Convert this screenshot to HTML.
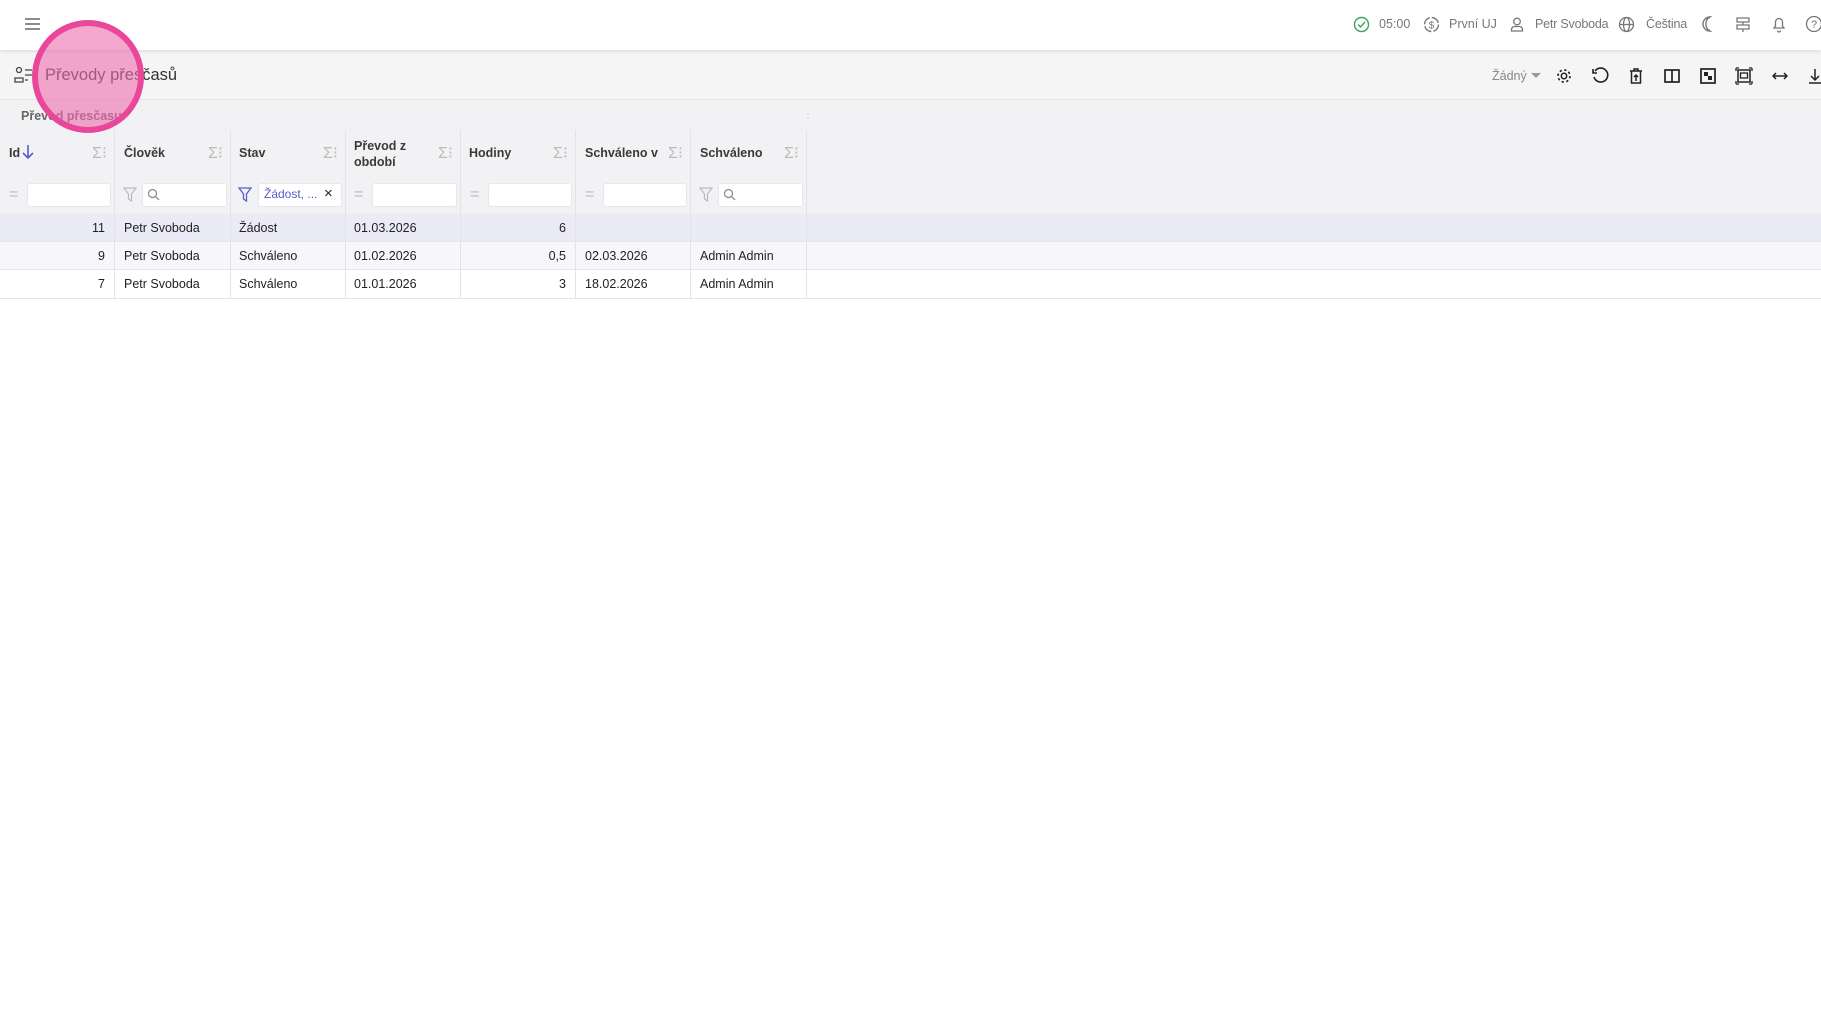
<!DOCTYPE html>
<html><head><meta charset="utf-8"><style>
*{box-sizing:border-box;margin:0;padding:0}
body{width:1821px;height:1017px;background:#fff;font-family:"Liberation Sans",sans-serif;color:#222;position:relative;overflow:hidden;font-size:12.5px}
.top{position:absolute;left:0;top:0;width:1821px;height:50px;background:#fff;box-shadow:0 1px 4px rgba(0,0,0,.12);z-index:2}
.gray{position:absolute;left:0;top:50px;width:1821px;height:164px;background:#f2f2f4}
.titlebar{position:absolute;left:0;top:50px;width:1821px;height:50px;background:#f5f5f5;border-bottom:1px solid #e6e6e8}
.abs{position:absolute;white-space:nowrap}
.ti{color:#777;font-size:12.5px}
.hd{font-weight:bold;font-size:12.5px;color:#3a3a3a}
.col{position:absolute;top:130px;height:169px;border-left:1px solid #e2e2e8}
.inp{position:absolute;top:183px;height:24px;background:#fff;border-radius:3px;border:1px solid #e8e8ec}
.row{position:absolute;left:0;width:1821px;border-bottom:1px solid #e4e4ea}
.sig{position:absolute;color:#bbb;font-size:16px}
svg{position:absolute}
</style></head><body>
<div class="top"></div>
<div class="gray"></div>
<div class="titlebar"></div>
<div class="row" style="top:214px;height:28px;background:#ebebf7"></div>
<div class="row" style="top:242px;height:28px;background:#f7f7fb"></div>
<div class="row" style="top:270px;height:29px;background:#fff"></div>

<!-- top bar -->
<svg style="left:24px;top:17px;z-index:3" width="17" height="14"><path d="M1 2h15M1 7h15M1 12h15" stroke="#666" stroke-width="1.6"/></svg>
<div style="position:absolute;left:0;top:0;width:1821px;height:50px;z-index:3">
<svg style="left:1353px;top:16px" width="17" height="17"><circle cx="8.5" cy="8.5" r="7" fill="none" stroke="#3aa55a" stroke-width="1.4"/><path d="M5 8.5l2.5 2.5 4.5-5" fill="none" stroke="#3aa55a" stroke-width="1.4"/></svg>
<div class="abs ti" style="left:1379px;top:17px">05:00</div>
<svg style="left:1423px;top:16px" width="17" height="17"><circle cx="8.5" cy="8.5" r="7" fill="none" stroke="#777" stroke-width="1.4" stroke-dasharray="9 2"/><text x="8.5" y="12.5" font-size="10" text-anchor="middle" fill="#777" font-family="Liberation Sans">$</text></svg>
<div class="abs ti" style="left:1449px;top:17px">První UJ</div>
<svg style="left:1509px;top:16px" width="16" height="17"><circle cx="8" cy="5.5" r="3.3" fill="none" stroke="#777" stroke-width="1.3"/><path d="M2.5 15v-1.5a3 3 0 013-3h5a3 3 0 013 3V15z" fill="none" stroke="#777" stroke-width="1.3"/></svg>
<div class="abs ti" style="left:1535px;top:17px;letter-spacing:-0.2px">Petr Svoboda</div>
<svg style="left:1618px;top:16px" width="17" height="17"><circle cx="8.5" cy="8.5" r="7" fill="none" stroke="#777" stroke-width="1.3"/><ellipse cx="8.5" cy="8.5" rx="3" ry="7" fill="none" stroke="#777" stroke-width="1.3"/><path d="M1.5 8.5h14" stroke="#777" stroke-width="1.3"/></svg>
<div class="abs ti" style="left:1646px;top:17px;letter-spacing:-0.2px">Čeština</div>
<svg style="left:1698px;top:15px" width="18" height="18"><path d="M12 2a7 7 0 100 14 8 8 0 010-14z" fill="none" stroke="#777" stroke-width="1.4"/></svg>
<svg style="left:1734px;top:15px" width="18" height="18"><path d="M3 3h12v4H3zM3 10h12v4H3zM9 7v3M9 14v3" fill="none" stroke="#777" stroke-width="1.3"/></svg>
<svg style="left:1770px;top:15px" width="18" height="18"><path d="M4 13h10l-1.5-2V7a3.5 3.5 0 00-7 0v4zM7.5 15.5a1.5 1.5 0 003 0" fill="none" stroke="#777" stroke-width="1.3"/></svg>
<svg style="left:1805px;top:15px" width="18" height="18"><circle cx="9" cy="9" r="7.5" fill="none" stroke="#777" stroke-width="1.3"/><text x="9" y="13" font-size="11" text-anchor="middle" fill="#777" font-family="Liberation Sans">?</text></svg>
</div>

<!-- title -->
<svg style="left:14px;top:66px" width="20" height="18"><circle cx="5" cy="4" r="2.5" fill="none" stroke="#444" stroke-width="1.3"/><path d="M1 16v-4h8v4zM11 4h7M11 9h7M11 14h3" fill="none" stroke="#444" stroke-width="1.3"/></svg>
<div class="abs" style="left:45px;top:66px;font-size:16.5px;color:#333">Převody přesčasů</div>
<div class="abs" style="left:1492px;top:69px;color:#888;font-size:12.5px">Žádný</div>
<svg style="left:1531px;top:73px" width="10" height="6"><path d="M0 0h10L5 5z" fill="#999"/></svg>
<svg style="left:1555px;top:67px" width="18" height="18"><circle cx="9" cy="9" r="2.7" fill="none" stroke="#222" stroke-width="1.5"/><circle cx="9" cy="9" r="6" fill="none" stroke="#222" stroke-width="1.6" stroke-dasharray="2.4 2.3"/></svg>
<svg style="left:1591px;top:67px" width="18" height="18"><path d="M4 4a7 7 0 11-1 6" fill="none" stroke="#222" stroke-width="1.6"/><path d="M2 2v4h4" fill="none" stroke="#222" stroke-width="1.6"/></svg>
<svg style="left:1627px;top:67px" width="18" height="18"><path d="M3 4h12M7 4V2h4v2M4.5 4v12h9V4M9 14V8M7 10l2-2 2 2" fill="none" stroke="#222" stroke-width="1.5"/></svg>
<svg style="left:1663px;top:67px" width="18" height="18"><rect x="2" y="3" width="14" height="12" fill="none" stroke="#222" stroke-width="1.7"/><path d="M9 3v12" stroke="#222" stroke-width="1.7"/></svg>
<svg style="left:1699px;top:67px" width="18" height="18"><rect x="2" y="2" width="14" height="14" fill="none" stroke="#222" stroke-width="1.7"/><rect x="5" y="5" width="4" height="4" fill="#222"/><rect x="9" y="9" width="4" height="4" fill="#222"/></svg>
<svg style="left:1735px;top:67px" width="18" height="18"><rect x="3" y="3" width="12" height="12" fill="none" stroke="#222" stroke-width="1.5"/><rect x="5.5" y="6" width="7" height="5" fill="none" stroke="#222" stroke-width="1.3"/><path d="M1 1h3M1 1v3M17 1h-3M17 1v3M1 17h3M1 17v-3M17 17h-3M17 17v-3" stroke="#222" stroke-width="1.3"/></svg>
<svg style="left:1771px;top:67px" width="18" height="18"><path d="M2 9h14M5 6L2 9l3 3M13 6l3 3-3 3" fill="none" stroke="#222" stroke-width="1.5"/></svg>
<svg style="left:1806px;top:67px" width="18" height="18"><path d="M9 2v11M5 9l4 4 4-4M3 16h12" fill="none" stroke="#222" stroke-width="1.5"/></svg>

<div class="abs" style="left:21px;top:109px;color:#666;font-size:12.5px;font-weight:bold">Převod přesčasu</div>
<div class="abs" style="left:803px;top:113px;color:#ccc;font-size:10px;line-height:4px">⋮<br>⋮</div>

<!-- columns -->
<div class="col" style="left:114px"></div><div class="col" style="left:230px"></div><div class="col" style="left:345px"></div><div class="col" style="left:460px"></div><div class="col" style="left:575px"></div><div class="col" style="left:690px"></div><div class="col" style="left:806px"></div>

<div class="abs hd" style="left:9px;top:146px">Id</div>
<svg style="left:22px;top:144px" width="12" height="16"><path d="M6 1v13M1 9l5 5 5-5" fill="none" stroke="#5b5bd0" stroke-width="1.6"/></svg>
<div class="abs hd" style="left:124px;top:146px">Člověk</div>
<div class="abs hd" style="left:239px;top:146px">Stav</div>
<div class="abs hd" style="left:354px;top:138px;line-height:16px">Převod z<br>období</div>
<div class="abs hd" style="left:469px;top:146px">Hodiny</div>
<div class="abs hd" style="left:585px;top:146px">Schváleno v</div>
<div class="abs hd" style="left:700px;top:146px">Schváleno</div>

<div class="sig" style="left:92px;top:143px">Σ⁝</div><div class="sig" style="left:208px;top:143px">Σ⁝</div><div class="sig" style="left:323px;top:143px">Σ⁝</div><div class="sig" style="left:438px;top:143px">Σ⁝</div><div class="sig" style="left:553px;top:143px">Σ⁝</div><div class="sig" style="left:668px;top:143px">Σ⁝</div><div class="sig" style="left:784px;top:143px">Σ⁝</div>

<!-- filters -->
<div class="abs" style="left:9px;top:186px;color:#bbb;font-size:16px">=</div><div class="inp" style="left:27px;width:84px"></div>
<svg style="left:123px;top:187px" width="14" height="15"><path d="M1 1h12L8.5 7v7l-3-2V7z" fill="none" stroke="#bbb" stroke-width="1.2"/></svg><div class="inp" style="left:142px;width:85px"></div>
<svg style="left:147px;top:188px" width="13" height="13"><circle cx="5.5" cy="5.5" r="4" fill="none" stroke="#888" stroke-width="1.2"/><path d="M8.5 8.5l3.5 3.5" stroke="#888" stroke-width="1.2"/></svg>
<svg style="left:238px;top:187px" width="14" height="15"><path d="M1 1h12L8.5 7v7l-3-2V7z" fill="none" stroke="#5b5bd0" stroke-width="1.3"/></svg><div class="inp" style="left:258px;width:84px"></div>
<div class="abs" style="left:264px;top:187px;color:#5b5bc0;font-size:12px">Žádost, ...</div><div class="abs" style="left:324px;top:185px;font-size:15px">×</div>
<div class="abs" style="left:354px;top:186px;color:#bbb;font-size:16px">=</div><div class="inp" style="left:372px;width:85px"></div>
<div class="abs" style="left:470px;top:186px;color:#bbb;font-size:16px">=</div><div class="inp" style="left:488px;width:84px"></div>
<div class="abs" style="left:585px;top:186px;color:#bbb;font-size:16px">=</div><div class="inp" style="left:603px;width:84px"></div>
<svg style="left:699px;top:187px" width="14" height="15"><path d="M1 1h12L8.5 7v7l-3-2V7z" fill="none" stroke="#bbb" stroke-width="1.2"/></svg><div class="inp" style="left:718px;width:85px"></div>
<svg style="left:723px;top:188px" width="13" height="13"><circle cx="5.5" cy="5.5" r="4" fill="none" stroke="#888" stroke-width="1.2"/><path d="M8.5 8.5l3.5 3.5" stroke="#888" stroke-width="1.2"/></svg>

<!-- data -->
<div class="abs" style="left:80px;top:221px;width:25px;text-align:right">11</div><div class="abs" style="left:124px;top:221px">Petr Svoboda</div><div class="abs" style="left:239px;top:221px">Žádost</div><div class="abs" style="left:354px;top:221px">01.03.2026</div><div class="abs" style="left:540px;top:221px;width:26px;text-align:right">6</div>
<div class="abs" style="left:80px;top:249px;width:25px;text-align:right">9</div><div class="abs" style="left:124px;top:249px">Petr Svoboda</div><div class="abs" style="left:239px;top:249px">Schváleno</div><div class="abs" style="left:354px;top:249px">01.02.2026</div><div class="abs" style="left:540px;top:249px;width:26px;text-align:right">0,5</div><div class="abs" style="left:585px;top:249px">02.03.2026</div><div class="abs" style="left:700px;top:249px">Admin Admin</div>
<div class="abs" style="left:80px;top:277px;width:25px;text-align:right">7</div><div class="abs" style="left:124px;top:277px">Petr Svoboda</div><div class="abs" style="left:239px;top:277px">Schváleno</div><div class="abs" style="left:354px;top:277px">01.01.2026</div><div class="abs" style="left:540px;top:277px;width:26px;text-align:right">3</div><div class="abs" style="left:585px;top:277px">18.02.2026</div><div class="abs" style="left:700px;top:277px">Admin Admin</div>

<!-- pink circle -->
<div style="position:absolute;left:32px;top:20px;width:112px;height:113px;border-radius:50%;border:6px solid #e8479a;background:rgba(236,110,175,.6);z-index:5"></div>
</body></html>
